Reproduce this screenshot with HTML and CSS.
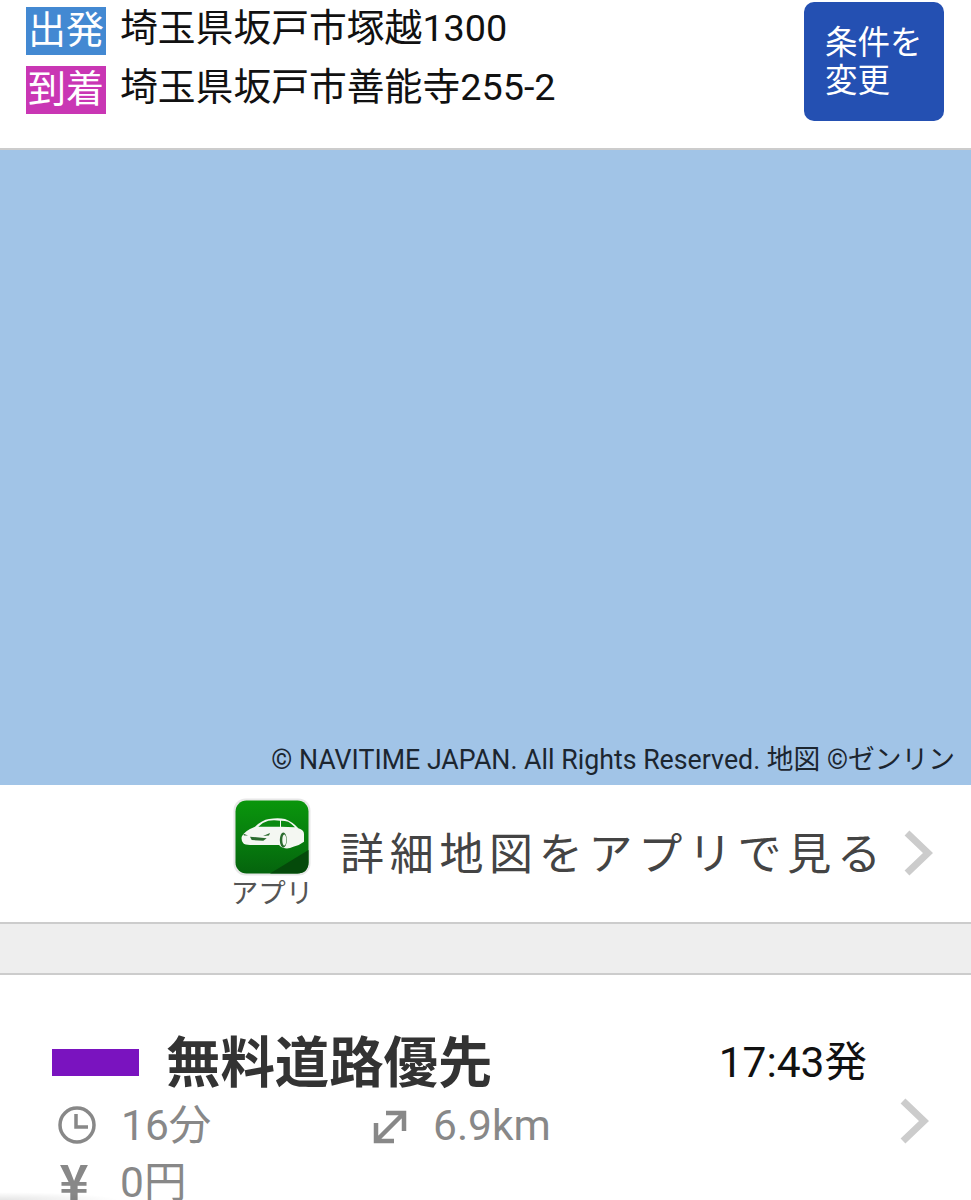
FILE: index.html
```html
<!DOCTYPE html>
<html lang="ja">
<head>
  <meta charset="UTF-8">
  <title>ルート検索結果</title>
  <link rel="stylesheet" href="styles.css">
</head>
<body>
  <header class="search-head">
    <div class="points">
      <div class="point">
        <span class="point-label label-start">出発</span>
        <span class="point-name">埼玉県坂戸市塚越1300</span>
      </div>
      <div class="point">
        <span class="point-label label-goal">到着</span>
        <span class="point-name">埼玉県坂戸市善能寺255-2</span>
      </div>
    </div>
    <button class="change-btn" type="button">条件を<br>変更</button>
  </header>

  <div class="map">
    <span class="map-credit">© NAVITIME JAPAN. All Rights Reserved. 地図 ©ゼンリン</span>
  </div>

  <a class="app-link">
    <span class="app-badge">
      <svg class="app-icon" width="78" height="78" viewBox="0 0 78 78">
        <defs>
          <linearGradient id="icon-bg" x1="0" y1="0" x2="0" y2="1">
            <stop offset="0" stop-color="#0a960c"/>
            <stop offset="0.5" stop-color="#077f0e"/>
            <stop offset="1" stop-color="#05640d"/>
          </linearGradient>
        </defs>
        <rect x="0.5" y="0.5" width="77" height="77" rx="12" fill="#e8e8e8"/>
        <rect x="2.500" y="2.500" width="73" height="73" rx="11" fill="url(#icon-bg)"/>
        <path d="M37 75.500 L75.500 52 V64 Q75.500 75.500 64 75.500 Z" fill="#044a0a"/>
        <!-- car -->
        <path d="M8.700 38.700 Q11 33 22 28.700 Q29 22 36 21 Q45 19.500 52 21 Q60 24 65.300 30.300 Q71 32 71 36 V43.700 Q67 47 60.300 48.700 Q56 51 52 50.300 Q48 50 46 47 H17 Q12 47 10.300 45.300 Q8 43 8.700 38.700 Z" fill="#f4f7f2"/>
        <path d="M25.300 28.700 Q30 24 35.300 22.700 Q41 22 47 22.700 V28.700 Z M48 22.700 Q52 22.700 55.300 23.700 Q59 26 62 29.300 L48 28.700 Z" fill="#0a8a10"/>
        <path d="M17 38.700 L33.700 40.300 L30.300 42.700 L18.700 42 Z" fill="#2a6b2e"/>
        <path d="M10 35.500 L15 37.500 L11 37.500 Z M30 38 L37 35 L36 37.500 Z" fill="#2a6b2e"/>
        <ellipse cx="50.300" cy="42" rx="3.500" ry="7.500" fill="#2a6b2e"/>
        <ellipse cx="51.300" cy="42" rx="2" ry="5.500" fill="#f4f7f2"/>
      </svg>
      <span class="app-badge-text">アプリ</span>
    </span>
    <span class="app-link-text">詳細地図をアプリで見る</span>
    <svg class="chevron" width="30" height="46" viewBox="0 0 30 46">
      <path d="M4 3 L25 23 L4 43" fill="none" stroke="#ccc" stroke-width="7"/>
    </svg>
  </a>

  <div class="band"></div>

  <section class="route">
    <div class="route-head">
      <span class="route-line"></span>
      <h2 class="route-title">無料道路優先</h2>
      <span class="route-time">17:43発</span>
    </div>
    <div class="route-body">
      <div class="route-stats">
        <div class="stat stat-time">
          <svg class="stat-icon" width="40" height="40" viewBox="0 0 40 40">
            <circle cx="20" cy="20" r="17" fill="none" stroke="#888" stroke-width="3.500"/>
            <path d="M19 9 V22 H31" fill="none" stroke="#888" stroke-width="3.500"/>
          </svg>
          <span>16分</span>
        </div>
        <div class="stat stat-dist">
          <svg class="stat-icon" width="36" height="36" viewBox="0 0 36 36">
            <path d="M6 30 L30 6 M14 4 H32 V22 M4 14 V32 H22" fill="none" stroke="#888" stroke-width="4.500"/>
          </svg>
          <span>6.9km</span>
        </div>
        <div class="stat stat-fare">
          <span class="yen">¥</span>
          <span>0円</span>
        </div>
      </div>
      <svg class="chevron route-chevron" width="30" height="46" viewBox="0 0 30 46">
        <path d="M4 3 L25 23 L4 43" fill="none" stroke="#ccc" stroke-width="7"/>
      </svg>
    </div>
  </section>

  <div class="edge-shadow"></div>
</body>
</html>
```

FILE: styles.css
```css
html, body {
  margin: 0;
  height: 1200px;
  overflow: hidden;
}

body {
  position: relative;
  font-family: Roboto, 'Noto Sans CJK JP', sans-serif;
  background-color: #fff;
  color: #111;
}

.search-head {
  display: flex;
  justify-content: space-between;
  height: 150px;
  padding: 2px 27px 0 26px;
  box-sizing: border-box;
  border-bottom: 2px solid #ccc;
}

.points {
  display: flex;
  flex-direction: column;
  gap: 11px;
  padding-top: 5px;
}

.point {
  display: flex;
  align-items: center;
  gap: 14px;
}

.point-label {
  width: 80px;
  height: 48px;
  line-height: 46px;
  font-size: 38px;
  text-align: center;
  color: #fff;
}

.label-start {
  background-color: #4389d2;
}

.label-goal {
  background-color: #c936b4;
}

.point-name {
  font-size: 37.800px;
  line-height: 42px;
  padding-bottom: 6px;
}

.change-btn {
  width: 140px;
  height: 119px;
  padding: 0 0 0 21px;
  border: none;
  border-radius: 10px;
  background-color: #2450b2;
  color: #fff;
  font-family: inherit;
  font-size: 32.500px;
  line-height: 38px;
  text-align: left;
}

.map {
  display: flex;
  justify-content: flex-end;
  align-items: flex-end;
  height: 635px;
  padding: 0 16px 10px 0;
  box-sizing: border-box;
  background-color: #a1c4e7;
}

.map-credit {
  font-size: 26.750px;
  line-height: 30px;
  color: #1c2630;
}

.app-link {
  display: flex;
  align-items: center;
  height: 139px;
  padding-left: 232px;
  box-sizing: border-box;
  border-bottom: 2px solid #ccc;
}

.app-badge {
  display: flex;
  flex-direction: column;
  align-items: center;
  width: 80px;
  margin-right: 28px;
}

.app-icon {
  display: block;
}

.app-badge-text {
  margin-top: 3px;
  font-size: 27.500px;
  line-height: 30px;
  white-space: nowrap;
  color: #555;
}

.app-link-text {
  margin-top: -6px;
  font-size: 44px;
  letter-spacing: 5.700px;
  color: #444;
}

.chevron {
  display: block;
  margin-left: 16px;
  margin-top: -2px;
}

.band {
  height: 49px;
  background-color: #eee;
  border-bottom: 2px solid #ccc;
}

.route {
  padding: 0 41px 0 52px;
}

.route-head {
  display: flex;
  align-items: center;
  height: 72px;
  margin-top: 49px;
}

.route-line {
  width: 87px;
  height: 27px;
  margin-top: 4px;
  background-color: #7a13bf;
}

.route-title {
  margin: -3px 0 0 27px;
  font-size: 54.400px;
  font-weight: 700;
  color: #333;
}

.route-time {
  margin-left: auto;
  margin-right: 63px;
  margin-top: -4px;
  font-size: 42.500px;
  color: #111;
}

.route-body {
  display: flex;
  justify-content: space-between;
}

.route-stats {
  display: grid;
  grid-template-columns: 312px 1fr;
  grid-auto-rows: 57px;
  width: 520px;
}

.stat {
  display: flex;
  align-items: center;
  gap: 24px;
  font-size: 42.500px;
  line-height: 52px;
  color: #888;
}

.stat span {
  margin-top: 2px;
}

.stat-time {
  padding-left: 5px;
  gap: 24px;
}

.stat-dist {
  gap: 25px;
  padding-left: 8px;
}

.stat-dist .stat-icon {
  margin-top: 4px;
}

.stat .yen {
  width: 44px;
  margin-top: -5px;
  font-family: 'Noto Sans CJK JP', sans-serif;
  font-size: 50px;
  font-weight: 700;
  line-height: 56px;
  text-align: center;
}

.route-chevron {
  margin-left: 0;
  margin-top: 2px;
  margin-right: 1px;
}

.edge-shadow {
  position: absolute;
  left: 0;
  bottom: 0;
  width: 120px;
  height: 8px;
  background: radial-gradient(ellipse at 0 100%, rgba(0, 0, 0, 0.1), rgba(0, 0, 0, 0) 70%);
}
```
